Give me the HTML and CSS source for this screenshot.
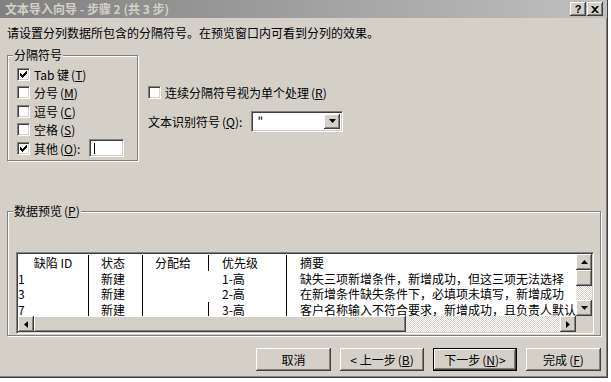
FILE: index.html
```html
<!DOCTYPE html>
<html lang="zh-CN">
<head>
    <meta charset="UTF-8">
    <title>文本导入向导 - 步骤 2 (共 3 步)</title>
    <link rel="stylesheet" href="styles.css">
</head>
<body>
    <div class="window">
        <div class="titlebar">
            <span class="title">文本导入向导 - 步骤 2 (共 3 步)</span>
            <div class="title-buttons">
                <span class="tbtn help">?</span>
                <span class="tbtn close">
                    <svg width="8" height="7" viewBox="0 0 8 7"><path d="M0 0h2l2 2 2-2h2L5 3.5 8 7H6L4 5 2 7H0l3-3.5z" fill="#000"/></svg>
                </span>
            </div>
        </div>
        <div class="content">
            <p class="intro">请设置分列数据所包含的分隔符号。在预览窗口内可看到分列的效果。</p>

            <div class="top">
                <div class="group delims">
                    <span class="group-title">分隔符号</span>
                    <div class="check"><span class="box checked"><svg width="7" height="7" viewBox="0 0 7 7"><path d="M6 0h1v3H6v1H5v1H4v1H3v1H2V6H1V5H0V2h1v1h1v1h1V3h1V2h1V1h1z" fill="#000"/></svg></span>Tab 键<span class="key">(<u>T</u>)</span></div>
                    <div class="check"><span class="box"></span>分号<span class="key">(<u>M</u>)</span></div>
                    <div class="check"><span class="box"></span>逗号<span class="key">(<u>C</u>)</span></div>
                    <div class="check"><span class="box"></span>空格<span class="key">(<u>S</u>)</span></div>
                    <div class="check"><span class="box checked"><svg width="7" height="7" viewBox="0 0 7 7"><path d="M6 0h1v3H6v1H5v1H4v1H3v1H2V6H1V5H0V2h1v1h1v1h1V3h1V2h1V1h1z" fill="#000"/></svg></span>其他<span class="key">(<u>O</u>):</span><span class="field"><span class="caret"></span></span></div>
                </div>
                <div class="options">
                    <div class="check"><span class="box"></span>连续分隔符号视为单个处理<span class="key">(<u>R</u>)</span></div>
                    <div class="qualifier">
                        <span>文本识别符号<span class="key">(<u>Q</u>):</span></span>
                        <div class="combo">
                            <span class="combo-value">"</span>
                            <span class="sbtn"><svg width="7" height="4" viewBox="0 0 7 4"><path d="M0 0h7L3.5 4z" fill="#000"/></svg></span>
                        </div>
                    </div>
                </div>
            </div>

            <div class="group preview">
                <span class="group-title">数据预览<span class="key">(<u>P</u>)</span></span>
                <div class="preview-box">
                    <div class="grid">
                        <div class="row head">
                            <span class="c1">缺陷 ID</span>
                            <span class="c2">状态</span>
                            <span class="c3">分配给</span>
                            <span class="c4">优先级</span>
                            <span class="c5">摘要</span>
                        </div>
                        <div class="row">
                            <span class="c1 left">1</span>
                            <span class="c2">新建</span>
                            <span class="c3 open"></span>
                            <span class="c4">1-高</span>
                            <span class="c5">缺失三项新增条件，新增成功，但这三项无法选择</span>
                        </div>
                        <div class="row">
                            <span class="c1 left">3</span>
                            <span class="c2">新建</span>
                            <span class="c3 open"></span>
                            <span class="c4">2-高</span>
                            <span class="c5">在新增条件缺失条件下，必填项未填写，新增成功</span>
                        </div>
                        <div class="row">
                            <span class="c1 left">7</span>
                            <span class="c2">新建</span>
                            <span class="c3"></span>
                            <span class="c4">3-高</span>
                            <span class="c5">客户名称输入不符合要求，新增成功，且负责人默认</span>
                        </div>
                    </div>
                    <div class="vscroll">
                        <span class="sbtn"><svg width="7" height="4" viewBox="0 0 7 4"><path d="M3.5 0L7 4H0z" fill="#000"/></svg></span>
                        <span class="thumb"></span>
                        <span class="track"></span>
                        <span class="sbtn"><svg width="7" height="4" viewBox="0 0 7 4"><path d="M0 0h7L3.5 4z" fill="#000"/></svg></span>
                    </div>
                    <div class="hscroll">
                        <span class="sbtn"><svg width="4" height="7" viewBox="0 0 4 7"><path d="M0 3.5L4 0v7z" fill="#000"/></svg></span>
                        <span class="thumb"></span>
                        <span class="track"></span>
                        <span class="sbtn"><svg width="4" height="7" viewBox="0 0 4 7"><path d="M4 3.5L0 7V0z" fill="#000"/></svg></span>
                    </div>
                    <div class="corner"></div>
                </div>
            </div>

            <div class="buttons">
                <span class="button">取消</span>
                <span class="button wide">&lt; 上一步<span class="key">(<u>B</u>)</span></span>
                <span class="button wide default">下一步<span class="key">(<u>N</u>)</span> &gt;</span>
                <span class="button">完成<span class="key">(<u>F</u>)</span></span>
            </div>
        </div>
    </div>
</body>
</html>
```

FILE: styles.css
```css
body {
    margin: 0;
    background: #ffffff;
    font-family: "Noto Sans CJK SC", sans-serif;
    font-size: 12px;
    color: #000;
}
.window {
    width: 607px;
    height: 377px;
    background: #d4d0c8;
    border-right: 1px solid #404040;
    border-bottom: 1px solid #404040;
    box-shadow: inset -1px -1px #808080;
    overflow: hidden;
}
.titlebar {
    height: 18px;
    display: flex;
    align-items: center;
    justify-content: space-between;
    padding: 0 4px 0 5px;
    background: linear-gradient(to right, #808080, #c0c0c0);
}
.title {
    color: #d4d0c8;
    font-weight: bold;
    line-height: 18px;
}
.title-buttons {
    display: flex;
    gap: 1px;
}
.tbtn {
    width: 16px;
    height: 14px;
    box-sizing: border-box;
    display: flex;
    align-items: center;
    justify-content: center;
    background: #d4d0c8;
    box-shadow: inset -1px -1px #404040, inset 1px 1px #fff, inset -2px -2px #808080;
    font-family: "Liberation Sans", sans-serif;
    font-weight: bold;
    font-size: 11px;
    line-height: 14px;
}
.content {
    padding-left: 7px;
}
.intro {
    margin: 8px 0 0;
    line-height: 14px;
}
.key {
    padding-left: 2px;
}
.top {
    display: flex;
    margin-top: 15px;
}
.group {
    position: relative;
    box-sizing: border-box;
    border: 1px solid #808080;
    box-shadow: inset 1px 1px #fff, 1px 1px #fff;
}
.group-title {
    position: absolute;
    top: -8px;
    left: 5px;
    padding: 0 1px;
    background: #d4d0c8;
    line-height: 14px;
}
.delims {
    width: 131px;
    height: 106px;
    padding: 9px 0 0 9px;
}
.check {
    display: flex;
    align-items: center;
    height: 18.5px;
    white-space: nowrap;
}
.box {
    width: 13px;
    height: 13px;
    box-sizing: border-box;
    flex: none;
    margin-right: 4px;
    padding: 2px;
    background: #fff;
    border-top: 1px solid #808080;
    border-left: 1px solid #808080;
    border-right: 1px solid #fff;
    border-bottom: 1px solid #fff;
    box-shadow: inset 1px 1px #404040, inset -1px -1px #d4d0c8;
}
.box svg {
    display: block;
}
.field {
    width: 35px;
    height: 18px;
    box-sizing: border-box;
    margin-left: 9px;
    padding: 3px 0 0 4px;
    background: #fff;
    border-top: 1px solid #808080;
    border-left: 1px solid #808080;
    border-right: 1px solid #fff;
    border-bottom: 1px solid #fff;
    box-shadow: inset 1px 1px #404040, inset -1px -1px #d4d0c8;
}
.caret {
    display: block;
    width: 1px;
    height: 11px;
    background: #000;
}
.options {
    margin: 28px 0 0 10px;
}
.qualifier {
    display: flex;
    align-items: center;
    margin-top: 9px;
}
.combo {
    display: flex;
    width: 92px;
    height: 21px;
    box-sizing: border-box;
    padding: 2px;
    background: #fff;
    border-top: 1px solid #808080;
    border-left: 1px solid #808080;
    border-right: 1px solid #fff;
    border-bottom: 1px solid #fff;
    box-shadow: inset 1px 1px #404040, inset -1px -1px #d4d0c8;
    margin-left: 9px;
}
.combo-value {
    flex: 1;
    padding-left: 3px;
    line-height: 15px;
}
.sbtn {
    width: 16px;
    height: 16px;
    box-sizing: border-box;
    flex: none;
    display: flex;
    align-items: center;
    justify-content: center;
    background: #d4d0c8;
    box-shadow: inset -1px -1px #404040, inset 1px 1px #fff, inset -2px -2px #808080;
}
.combo .sbtn {
    height: 15px;
}
.preview {
    width: 594px;
    height: 125px;
    margin-top: 50px;
    padding: 40px 0 0 8px;
}
.preview-box {
    display: grid;
    grid-template-columns: 1fr 16px;
    grid-template-rows: 1fr 16px;
    width: 578px;
    height: 82px;
    box-sizing: border-box;
    border-top: 1px solid #808080;
    border-left: 1px solid #808080;
    border-right: 1px solid #fff;
    border-bottom: 1px solid #fff;
    box-shadow: inset 1px 1px #404040, inset -1px -1px #d4d0c8;
    padding: 1px;
}
.grid {
    background: #fff;
    overflow: hidden;
    padding-top: 1px;
}
.row {
    display: grid;
    grid-template-columns: 71px 54px 66px 78px 1fr;
    height: 15.5px;
    line-height: 15.5px;
    white-space: nowrap;
}
.row span {
    box-sizing: border-box;
    border-right: 1px solid #000;
    overflow: hidden;
}
.row .c5 {
    border-right: none;
    padding-left: 13px;
}
.row .open {
    border-right-color: #fff;
}
.c1 {
    text-align: center;
}
.c1.left {
    text-align: left;
}
.c2 {
    padding-left: 12px;
}
.c3 {
    padding-left: 12px;
}
.c4 {
    padding-left: 13px;
}
.vscroll {
    display: flex;
    flex-direction: column;
}
.hscroll {
    display: flex;
}
.track {
    flex: 1;
    background: repeating-conic-gradient(#d4d0c8 0 25%, #fff 0 50%) 0 0 / 2px 2px;
}
.thumb {
    background: #d4d0c8;
    box-shadow: inset -1px -1px #404040, inset 1px 1px #fff, inset -2px -2px #808080;
}
.vscroll .thumb {
    height: 16px;
}
.hscroll .thumb {
    width: 372px;
}
.corner {
    background: #d4d0c8;
}
.buttons {
    display: flex;
    justify-content: flex-end;
    gap: 9px;
    margin-top: 12px;
    padding-right: 6px;
}
.button {
    width: 75px;
    height: 23px;
    box-sizing: border-box;
    display: flex;
    align-items: center;
    justify-content: center;
    background: #d4d0c8;
    box-shadow: inset -1px -1px #404040, inset 1px 1px #fff, inset -2px -2px #808080;
    white-space: nowrap;
}
.button.wide {
    width: 84px;
}
.button.default {
    border: 1px solid #000;
}
```
